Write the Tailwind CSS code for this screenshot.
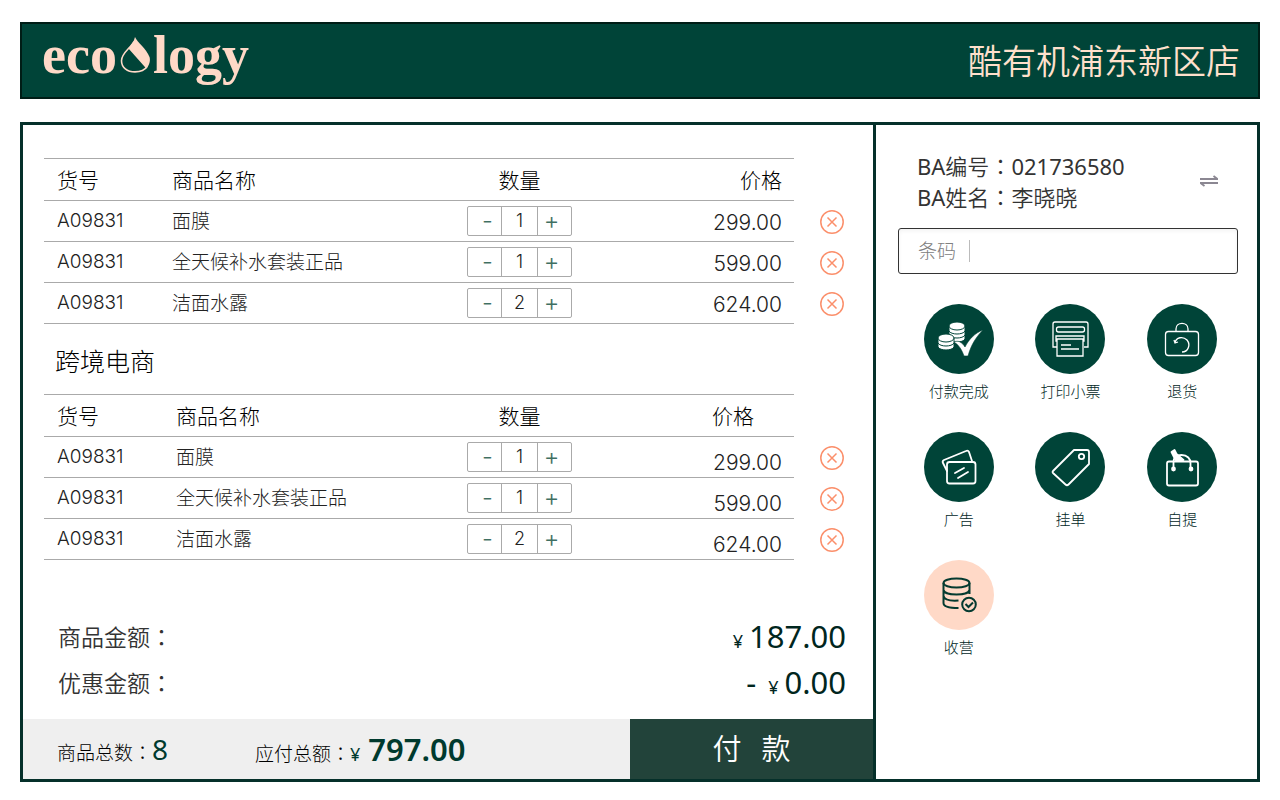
<!DOCTYPE html>
<html lang="zh-CN">
<head>
    <meta charset="UTF-8">
    <meta name="viewport" content="width=device-width, initial-scale=1.0">
    <title>ecoology 收银台</title>
    <script src="https://cdn.jsdelivr.net/npm/@tailwindcss/browser@4"></script>
</head>
<body class="min-h-screen flex flex-col gap-[23px] px-5 pt-[22px] pb-[18px] bg-white font-light text-[#222] font-['Noto_Sans','Noto_Sans_CJK_SC',sans-serif]">

    <header class="h-[77px] shrink-0 flex items-center justify-between pl-5 pr-[18px] bg-[#004438] border-2 border-[#001d16] text-[#ffe0cc]">
        <a href="#" aria-label="ecoology" class="pb-3 flex items-baseline text-[54px] leading-[56px] font-bold font-['Liberation_Serif',serif] text-[#ffd9c7]">
            <span>eco</span>
            <svg class="w-8 h-9 mx-0.5" viewBox="0 0 28 32" fill="none">
                <path d="M13 4C10 10 2 14 2 21c0 6 5 10 12 10 5 0 9-2 11-5" stroke="#ffd9c7" stroke-width="1.4"/>
                <path d="M14 0c2 5 10 10 13 18 1 4-1 8-3 10L8 10c3-3 5-6 6-10z" fill="#ffd9c7"/>
            </svg>
            <span>logy</span>
        </a>
        <h1 class="text-[34px] leading-10 font-[350]">酷有机浦东新区店</h1>
    </header>

    <main class="flex-1 flex border-3 border-[#05302a]">
        <section class="flex-1 flex flex-col">
            <div class="pl-[21px] pr-[3px] pt-[33px]">
                <table class="w-full table-fixed border-separate border-spacing-0">
                    <thead>
                        <tr class="text-[21px] leading-7 text-black">
                            <th class="w-[115px] h-[43px] pl-[13px] text-left font-light border-y border-[#aaa]">货号</th>
                            <th class="pl-[13px] text-left font-light border-y border-[#aaa]">商品名称</th>
                            <th class="w-[131px] font-light border-y border-[#aaa]">数量</th>
                            <th class="w-[209px] pr-3 text-right font-light border-y border-[#aaa]">价格</th>
                            <td class="w-[76px]"></td>
                        </tr>
                    </thead>
                    <tbody id="goods"></tbody>
                </table>

                <h2 class="h-[70px] pt-1 pl-[11px] flex items-center text-[25px] leading-8 text-black">跨境电商</h2>

                <table class="w-full table-fixed border-separate border-spacing-0">
                    <thead>
                        <tr class="text-[21px] leading-7 text-black">
                            <th class="w-[115px] h-[43px] pl-[13px] text-left font-light border-y border-[#aaa]">货号</th>
                            <th class="pl-[17px] text-left font-light border-y border-[#aaa]">商品名称</th>
                            <th class="w-[131px] font-light border-y border-[#aaa]">数量</th>
                            <th class="w-[209px] pr-10 text-right font-light border-y border-[#aaa]">价格</th>
                            <td class="w-[76px]"></td>
                        </tr>
                    </thead>
                    <tbody id="crossGoods"></tbody>
                </table>
            </div>

            <dl class="mt-auto pl-[35px] pr-[27px] pb-3.5 text-[#333]">
                <div class="h-[46px] flex items-center justify-between">
                    <dt class="text-[23px] leading-8 font-[350]">商品金额<span lang="zh-TW" class="font-['Noto_Sans_CJK_TC']">：</span></dt>
                    <dd class="flex items-baseline gap-1.5 font-normal text-[#00261e]"><span class="text-lg">¥</span><span class="text-[31px] leading-10">187.00</span></dd>
                </div>
                <div class="h-[46px] flex items-center justify-between">
                    <dt class="text-[23px] leading-8 font-[350]">优惠金额<span lang="zh-TW" class="font-['Noto_Sans_CJK_TC']">：</span></dt>
                    <dd class="flex items-baseline gap-1.5 font-normal text-[#00261e]"><span class="text-[31px] leading-10 pr-1.5">-</span><span class="text-lg">¥</span><span class="text-[31px] leading-10">0.00</span></dd>
                </div>
            </dl>

            <div class="h-[60px] flex bg-[#efefef] text-black">
                <div class="flex-1 flex items-center pl-[34px]">
                    <p class="w-[198px] flex items-baseline text-[19px]">商品总数<span lang="zh-TW" class="font-['Noto_Sans_CJK_TC']">：</span><span class="text-[28px] leading-10 font-normal text-[#003a2e]">8</span></p>
                    <p class="flex items-baseline text-[19px]">应付总额<span lang="zh-TW" class="font-['Noto_Sans_CJK_TC']">：</span><span class="text-lg font-normal text-[#003a2e]">¥</span><strong class="pl-2 text-[31px] leading-10 font-semibold text-[#003a2e]">797.00</strong></p>
                </div>
                <button class="w-[243px] flex items-center justify-center gap-5 bg-[#22433a] text-white text-[29px] font-[350] cursor-pointer hover:bg-[#2c5549]"><span>付</span> <span>款</span></button>
            </div>
        </section>

        <aside class="w-[384px] shrink-0 pl-[22px] pr-[19px] pt-[25px] border-l-3 border-[#05302a]">
            <div class="flex items-center justify-between pl-[19px] pr-5 text-[#333]">
                <div class="text-[22px] leading-[30px] font-[350]">
                    <p><span class="font-normal">BA</span>编号<span lang="zh-TW" class="font-['Noto_Sans_CJK_TC']">：</span><span class="font-normal">021736580</span></p>
                    <p><span class="font-normal">BA</span>姓名<span lang="zh-TW" class="font-['Noto_Sans_CJK_TC']">：</span>李晓晓</p>
                </div>
                <button aria-label="切换" class="cursor-pointer">
                    <svg class="w-[18px] h-3" viewBox="0 0 18 12" fill="none" stroke="#8b8792" stroke-width="1.8">
                        <path d="M0 4h17.500L13.500 1M18 8H.5l4 3"/>
                    </svg>
                </button>
            </div>

            <div class="mt-4 h-[46px] flex items-center pl-[19px] border border-[#333] rounded-[3px] inset-shadow-sm">
                <label for="barcode" class="pr-[13px] text-[19px] text-[#808080] border-r border-[#bbb] leading-[22px]">条码</label>
                <input id="barcode" type="text" class="flex-1 min-w-0 h-full px-2 text-lg outline-none">
            </div>

            <nav class="mt-[30px] pl-[5px] grid grid-cols-3 gap-y-[30px] text-[15px] leading-[22px] text-[#00261e]">
                <button class="flex flex-col items-center gap-1.5 cursor-pointer">
                    <svg class="size-[70px] rounded-full bg-[#004438]" viewBox="0 0 70 70" fill="none">
                        <g fill="#fff" stroke="#004438" stroke-width="1">
                            <path d="M25 31v4c2 4 14 4 16 0v-4z"/>
                            <path d="M25 27v4c2 4 14 4 16 0v-4z"/>
                            <path d="M25 22v5c2 4 14 4 16 0v-5z"/>
                            <ellipse cx="33" cy="22" rx="8" ry="4"/>
                            <path d="M14 39v4c2 4 14 4 16 0v-4z"/>
                            <path d="M14 34v5c2 4 14 4 16 0v-5z"/>
                            <ellipse cx="22" cy="34" rx="8" ry="4"/>
                        </g>
                        <path d="M30 38c4-2 8 0 11 5 4-8 10-14 18-17-7 7-12 15-15 26h-4c-2-6-5-11-10-14z" fill="#fff" stroke="#004438" stroke-width=".6"/>
                    </svg>
                    付款完成
                </button>
                <button class="flex flex-col items-center gap-1.5 cursor-pointer">
                    <svg class="size-[70px] rounded-full bg-[#004438]" viewBox="0 0 70 70" fill="none" stroke="#fff" stroke-width="1.3">
                        <path d="M22 43h-4V20q0-2 2-2h31q2 0 2 2v23h-4"/>
                        <rect x="21.500" y="23" width="28" height="5" rx="2"/>
                        <path d="M22 37h-1v-5h28v5h-1M22 35h26v17H22zM26 41h10M26 45h18"/>
                    </svg>
                    打印小票
                </button>
                <button class="flex flex-col items-center gap-1.5 cursor-pointer">
                    <svg class="size-[70px] rounded-full bg-[#004438]" viewBox="0 0 70 70" fill="none" stroke="#fff" stroke-width="1.3">
                        <rect x="18.500" y="27.500" width="33" height="24" rx="3"/>
                        <path d="M29 27.500V25c0-7.500 12-7.500 12 0v2.500M28 39c1-6 8-7 12-3 4 5 1 12-5 12M27 36l1 3 3-1"/>
                    </svg>
                    退货
                </button>
                <button class="flex flex-col items-center gap-1.5 cursor-pointer">
                    <svg class="size-[70px] rounded-full bg-[#004438]" viewBox="0 0 70 70" fill="none" stroke="#fff" stroke-width="1.8" stroke-linejoin="round" stroke-linecap="round">
                        <rect x="23" y="30" width="28.500" height="21.500" rx="2.500"/>
                        <path d="M23 39l-4-8q-1-2 1-3l22-9q2-1 3 1l3 9M31 41l9-5M34 46l10-6"/>
                    </svg>
                    广告
                </button>
                <button class="flex flex-col items-center gap-1.5 cursor-pointer">
                    <svg class="size-[70px] rounded-full bg-[#004438]" viewBox="0 0 70 70" fill="none" stroke="#fff" stroke-width="1.8" stroke-linejoin="round">
                        <path d="M39 18h13q2 0 2 2v12L33.500 52.500q-1.500 1.500-3 0L18 41q-1-1 0-2z"/>
                        <circle cx="46.500" cy="24.500" r="2.700"/>
                    </svg>
                    挂单
                </button>
                <button class="flex flex-col items-center gap-1.5 cursor-pointer">
                    <svg class="size-[70px] rounded-full bg-[#004438]" viewBox="0 0 70 70" fill="none" stroke="#fff" stroke-width="1.8" stroke-linejoin="round">
                        <rect x="20" y="29.500" width="31" height="24" rx="2"/>
                        <path d="M26.500 36v-6c0-4 3-7 8-7 6 0 9 4 9 8v5"/>
                        <path d="M24.500 20l3-2 2 4 7 6h-8z" fill="#fff"/>
                        <circle cx="26.500" cy="37" r="1.500" fill="#fff"/>
                        <circle cx="44" cy="37" r="1.500" fill="#fff"/>
                    </svg>
                    自提
                </button>
                <button class="flex flex-col items-center gap-1.5 cursor-pointer">
                    <svg class="size-[70px] rounded-full bg-[#ffd9c7]" viewBox="0 0 70 70" fill="none" stroke="#043a30" stroke-width="2">
                        <ellipse cx="32.500" cy="23" rx="13" ry="4.500"/>
                        <path d="M19.500 23v20c0 3 5 5 15 5M45.500 23v11M19.500 30c1 6 25 6 26 0M19.500 36c1 4 8 5 15 4.500"/>
                        <circle cx="45" cy="44.500" r="6.800"/>
                        <path d="M41.500 44l3 3 4.500-4.500"/>
                    </svg>
                    收营
                </button>
            </nav>
        </aside>
    </main>

    <script>
        const list = [
            { code: "A09831", name: "面膜", count: 1, price: "299.00" },
            { code: "A09831", name: "全天候补水套装正品", count: 1, price: "599.00" },
            { code: "A09831", name: "洁面水露", count: 2, price: "624.00" },
        ];

        function showGoods(id, nameClass, priceClass) {
            const body = document.getElementById(id);
            list.forEach((item) => {
                const row = document.createElement("tr");
                row.innerHTML = `
                    <td class="h-[41px] pl-[13px] text-[19px] leading-6 font-['Inter'] border-b border-[#aaa]">${item.code}</td>
                    <td class="${nameClass} text-[19px] leading-6 border-b border-[#aaa]">${item.name}</td>
                    <td class="border-b border-[#aaa]">
                        <div class="w-[105px] h-[30px] mx-auto flex border border-[#aaa] rounded-xs font-['Inter']">
                            <button aria-label="减少" class="w-[33px] pl-1.5 text-2xl leading-6 text-[#3f6f62] cursor-pointer">-</button>
                            <input aria-label="数量" type="text" value="${item.count}" class="flex-1 min-w-0 text-center text-lg leading-6 border-x border-[#aaa] outline-none">
                            <button aria-label="增加" class="w-[33px] pr-1.5 text-2xl leading-6 text-[#3f6f62] cursor-pointer">+</button>
                        </div>
                    </td>
                    <td class="${priceClass} pr-3 text-right text-[21px] leading-6 font-['Inter'] border-b border-[#aaa]">${item.price}</td>
                    <td>
                        <button aria-label="删除" class="block mx-auto cursor-pointer">
                            <svg class="size-6" viewBox="0 0 24 24" fill="none" stroke="#fb8f6b" stroke-width="1.5">
                                <circle cx="12" cy="12" r="11.200"/>
                                <path d="M7.500 7.500l9 9M16.500 7.500l-9 9"/>
                            </svg>
                        </button>
                    </td>`;
                body.appendChild(row);
            });
        }

        showGoods("goods", "pl-[13px]", "pt-1");
        showGoods("crossGoods", "pl-[17px]", "pt-3");
    </script>
</body>
</html>
